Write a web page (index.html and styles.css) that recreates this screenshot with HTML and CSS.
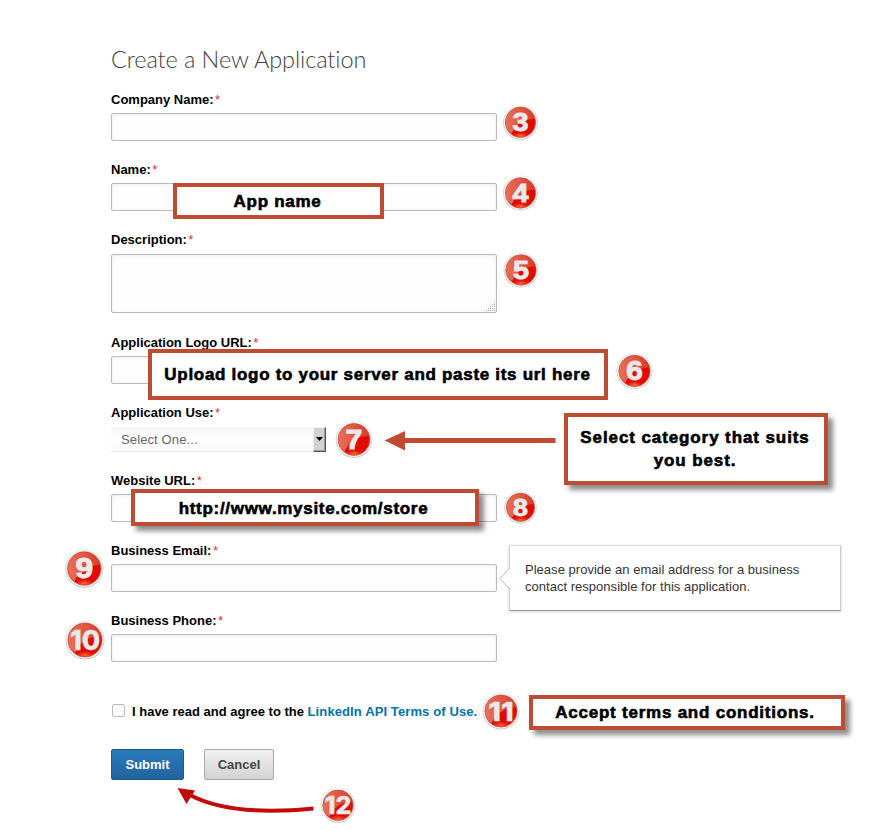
FILE: index.html
```html
<!DOCTYPE html>
<html lang="en">
<head>
<meta charset="utf-8">
<title>Create a New Application</title>
<link rel="stylesheet" href="styles.css">
</head>
<body>
<main class="page">
  <h1 class="title">Create a New Application</h1>
  <form class="form">
    <div class="field"><label for="company">Company Name:<span class="req">*</span></label><input class="control" id="company" type="text"></div>
    <div class="field"><label for="name">Name:<span class="req">*</span></label><input class="control" id="name" type="text"></div>
    <div class="field field-area"><label for="desc">Description:<span class="req">*</span></label>
      <div class="area control" id="desc"><svg class="grip" width="11" height="11" viewBox="0 0 11 11"><path d="M9 1.500h1M7 3.500h1M9 3.500h1M5 5.500h1M7 5.500h1M9 5.500h1M3 7.500h1M5 7.500h1M7 7.500h1M9 7.500h1M1 9.500h1M3 9.500h1M5 9.500h1M7 9.500h1M9 9.500h1" stroke="#aaa"/></svg></div>
    </div>
    <div class="field"><label for="logo">Application Logo URL:<span class="req">*</span></label><input class="control" id="logo" type="text"></div>
    <div class="field field-select"><label>Application Use:<span class="req">*</span></label>
      <div class="select"><span>Select One...</span><i class="drop"><svg width="7" height="4" viewBox="0 0 7 4"><path d="M0 0h7L3.5 4z"/></svg></i></div>
    </div>
    <div class="field"><label for="site">Website URL:<span class="req">*</span></label><input class="control" id="site" type="text"></div>
    <div class="field"><label for="email">Business Email:<span class="req">*</span></label><input class="control" id="email" type="text"></div>
    <div class="field"><label for="phone">Business Phone:<span class="req">*</span></label><input class="control" id="phone" type="text"></div>
    <div class="agree"><span class="check"></span><span>I have read and agree to the <a>LinkedIn API Terms of Use.</a></span></div>
    <div class="actions"><button type="button" class="btn primary">Submit</button><button type="button" class="btn">Cancel</button></div>
  </form>

  <aside class="tip">Please provide an email address for a business contact responsible for this application.
    <svg class="tip-arrow" width="11" height="23" viewBox="0 0 11 23"><path d="M11 1L.8 11.5 11 22" fill="#fff" stroke="#bbb"/></svg>
  </aside>

  <div class="callout c-name">App name</div>
  <div class="callout c-logo">Upload logo to your server and paste its url here</div>
  <div class="callout shadow c-category">Select category that suits<br>you best.</div>
  <div class="callout shadow c-url">http://www.mysite.com/store</div>
  <div class="callout shadow c-terms">Accept terms and conditions.</div>

  <svg class="marks" width="873" height="831" viewBox="0 0 873 831">
    <defs>
      <linearGradient id="ring" x1="0" y1="0" x2="0" y2="1"><stop offset="0" stop-color="#ececec"/><stop offset=".5" stop-color="#c6c9ca"/><stop offset="1" stop-color="#b9b9b9"/></linearGradient>
      <radialGradient id="glow" cx=".5" cy=".8" r=".55"><stop offset="0" stop-color="#ff7038"/><stop offset="1" stop-color="#ff4020" stop-opacity="0"/></radialGradient>
      <linearGradient id="gloss" x1="0" y1="0" x2="1" y2="0"><stop offset="0" stop-color="#e87058"/><stop offset="1" stop-color="#d93c2c"/></linearGradient>
      <g id="ball">
        <circle r="17.4" fill="url(#ring)"/>
        <circle r="16.7" fill="#f5f5f5"/>
        <circle r="15.2" fill="#e20a05" stroke="#b9685d" stroke-width=".7"/>
        <path d="M-12.500 8A14.800 14.800 0 1 1 14.300-3.500Q-2-3-9 11.500z" fill="url(#gloss)"/>
        <ellipse cy="11.500" rx="8" ry="3.500" fill="url(#glow)"/>
      </g>
    </defs>
    <g fill="#c04b33"><path d="M384.5 440.5L405 431v19.5z"/><path d="M404 438h151.500v5H404z"/></g>
    <path d="M190 795C222 812 268 813 313.500 808.500" fill="none" stroke="#c00b08" stroke-width="4"/>
    <path d="M177.500 788l17.500 2.500-8.500 13.500z" fill="#c00b08"/>
    <g class="nums">
      <g transform="translate(520.5 122.300)"><use href="#ball"/><text y="9" textLength="16" lengthAdjust="spacingAndGlyphs">3</text></g>
      <g transform="translate(520.5 193)"><use href="#ball"/><text y="9" textLength="16" lengthAdjust="spacingAndGlyphs">4</text></g>
      <g transform="translate(521 270)"><use href="#ball"/><text y="9" textLength="16" lengthAdjust="spacingAndGlyphs">5</text></g>
      <g transform="translate(634.500 371) scale(1.03)"><use href="#ball"/><text y="9" textLength="16" lengthAdjust="spacingAndGlyphs">6</text></g>
      <g transform="translate(354 439.500) scale(1.05)"><use href="#ball"/><text y="9" textLength="16" lengthAdjust="spacingAndGlyphs">7</text></g>
      <g transform="translate(520.5 507.300) scale(.93)"><use href="#ball"/><text y="9" textLength="16" lengthAdjust="spacingAndGlyphs">8</text></g>
      <g transform="translate(84.300 568.500) scale(1.1)"><use href="#ball"/><text y="9" textLength="16" lengthAdjust="spacingAndGlyphs">9</text></g>
      <g transform="translate(85 640) scale(1.12)"><use href="#ball"/><text y="9" class="two" textLength="27" lengthAdjust="spacingAndGlyphs">10</text></g>
      <g transform="translate(501 711) scale(1.06)"><use href="#ball"/><text y="9" class="two" textLength="24" lengthAdjust="spacingAndGlyphs">11</text></g>
      <g transform="translate(338 805.300)"><use href="#ball"/><text y="9" class="two" textLength="27" lengthAdjust="spacingAndGlyphs">12</text></g>
    </g>
  </svg>
</main>
</body>
</html>
```
FILE: styles.css
```css
* { box-sizing: border-box; }
body { margin: 0; background: #fff; color: #000; font: 13px/16px "Liberation Sans", Arial, sans-serif; }
.page { position: relative; width: 873px; height: 831px; padding: 43px 0 0 111px; overflow: hidden; }
.title { margin: 0; height: 49px; font: 300 23.5px/32px Lato, "Open Sans", sans-serif; letter-spacing: -.08px; color: #444; }
.form { width: 386px; display: flex; flex-direction: column; }
.field { display: flex; flex-direction: column; gap: 5px; margin-bottom: 21px; font-weight: bold; }
.field label { white-space: nowrap; }
.req { color: #e0302c; font-weight: normal; margin-left: 1.5px; }
.control { width: 386px; height: 28px; margin: 0; border: 1px solid #b9b9b9; border-radius: 2px; background: #fdfdfd; box-shadow: inset 0 1px 4px rgba(0,0,0,.06); }
.field-area { gap: 6px; margin-bottom: 22px; }
.area { height: 59px; display: flex; align-items: flex-end; justify-content: flex-end; }
.field-select { gap: 6px; }
.select { display: flex; width: 215px; height: 25px; align-items: center; justify-content: space-between; padding-left: 10px; background: linear-gradient(#f6f6f6, #fefefe 45%, #fafafa); border-bottom: 1px solid #e8e8e8; color: #666; font-weight: normal; letter-spacing: .12px; }
.select span { padding-top: 1px; }
.drop { display: flex; align-items: center; justify-content: center; width: 13px; height: 25px; background: #d2d2d2; border: 1px solid #f0f0f0; border-right-color: #555; border-bottom-color: #555; box-shadow: inset -1px -1px #999; }
.agree { display: flex; align-items: center; gap: 7px; height: 16px; margin: 21px 0 0 1px; font-weight: bold; white-space: nowrap; }
.agree a { color: #0073b2; letter-spacing: .11px; }
.check { width: 13px; height: 13px; margin-top: -3px; border: 1px solid #b9b9b9; border-radius: 2px; background: #fdfdfd; }
.actions { display: flex; gap: 20px; margin-top: 29px; }
.btn { width: 70px; height: 31px; padding: 0; border: 1px solid #aaa; border-radius: 2px; background: linear-gradient(#f1f1f1, #d2d2d2); color: #444; font: bold 13px/16px "Liberation Sans", Arial, sans-serif; }
.primary { width: 73px; border-color: #1c5a93; background: linear-gradient(#287bbc, #23639e); color: #fff; }
.tip { position: absolute; left: 509px; top: 545px; width: 332px; height: 66px; padding: 15px; background: #fff; border: 1px solid #ccc; border-top-color: #ddd; border-bottom-color: #999; box-shadow: 0 1px 3px rgba(0,0,0,.18); color: #333; line-height: 17px; letter-spacing: .025px; }
.tip-arrow { position: absolute; left: -11px; top: 21px; }
.callout { position: absolute; display: flex; align-items: center; justify-content: center; padding-right: 2px; text-align: center; border: 4px solid #c04b33; background: #fff; font: bold 17px/23px "Liberation Sans", Arial, sans-serif; letter-spacing: .7px; -webkit-text-stroke: .6px #000; white-space: nowrap; }
.shadow { box-shadow: 5px 5px 5px rgba(0,0,0,.45); }
.c-name { left: 173px; top: 183px; width: 211px; height: 36px; }
.c-logo { left: 148px; top: 349px; width: 460px; height: 51px; padding-right: 1px; }
.c-category { left: 564px; top: 413px; width: 264px; height: 72px; letter-spacing: .9px; }
.c-url { left: 131px; top: 489px; width: 348px; height: 37px; padding: 1px 3px 0 0; }
.c-terms { left: 529px; top: 695px; width: 316px; height: 35px; padding-right: 4px; letter-spacing: .77px; }
.marks { position: absolute; left: 0; top: 0; pointer-events: none; }
.nums text { font: bold 26px "Liberation Sans", Arial, sans-serif; text-anchor: middle; fill: #e9e9e9; stroke: #e9e9e9; stroke-width: 1px; }
.nums .two { font: 800 24.5px Inter, "Liberation Sans", sans-serif; stroke-width: .3px; }
```
